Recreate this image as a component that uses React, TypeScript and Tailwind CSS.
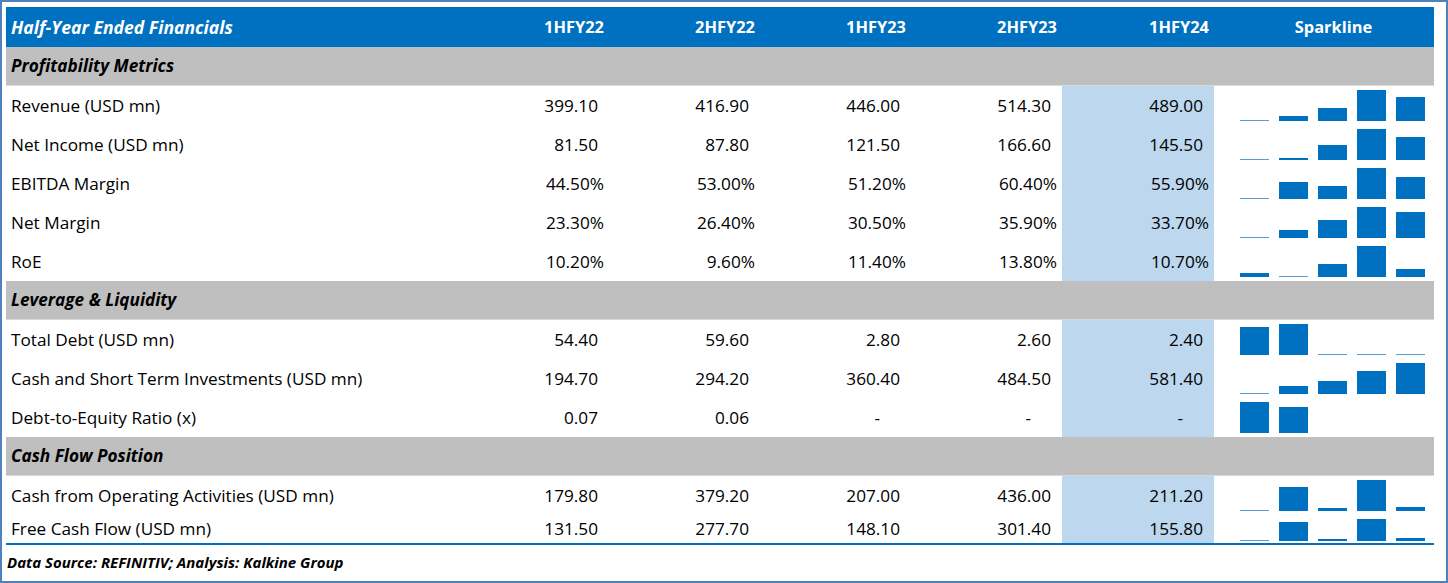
import React from 'react'

// Half-year financials table with column sparklines (Excel-style)

type Row = {
  label: string
  values: string[]
  kind: 'num' | 'pct'
  spark: number[]
  bars?: number[]
  short?: boolean
}

type Section = { title: string; rows: Row[] }

const grid = 'grid grid-cols-[452px_151px_151px_151px_151px_152px_220px]'
const font = { fontFamily: '"Open Sans", "Noto Sans", sans-serif' }

const sections: Section[] = [
  {
    title: 'Profitability Metrics',
    rows: [
      { label: 'Revenue (USD mn)', values: ['399.10', '416.90', '446.00', '514.30', '489.00'], kind: 'num', spark: [399.1, 416.9, 446, 514.3, 489] },
      { label: 'Net Income (USD mn)', values: ['81.50', '87.80', '121.50', '166.60', '145.50'], kind: 'num', spark: [81.5, 87.8, 121.5, 166.6, 145.5] },
      { label: 'EBITDA Margin', values: ['44.50%', '53.00%', '51.20%', '60.40%', '55.90%'], kind: 'pct', spark: [44.5, 53, 51.2, 60.4, 55.9] },
      { label: 'Net Margin', values: ['23.30%', '26.40%', '30.50%', '35.90%', '33.70%'], kind: 'pct', spark: [23.3, 26.4, 30.5, 35.9, 33.7] },
      { label: 'RoE', values: ['10.20%', '9.60%', '11.40%', '13.80%', '10.70%'], kind: 'pct', spark: [10.2, 9.6, 11.4, 13.8, 10.7] },
    ],
  },
  {
    title: 'Leverage & Liquidity',
    rows: [
      { label: 'Total Debt (USD mn)', values: ['54.40', '59.60', '2.80', '2.60', '2.40'], kind: 'num', spark: [54.4, 59.6, 2.8, 2.6, 2.4] },
      { label: 'Cash and Short Term Investments (USD mn)', values: ['194.70', '294.20', '360.40', '484.50', '581.40'], kind: 'num', spark: [194.7, 294.2, 360.4, 484.5, 581.4] },
      { label: 'Debt-to-Equity Ratio (x)', values: ['0.07', '0.06', '-', '-', '-'], kind: 'num', spark: [], bars: [31, 26, 0, 0, 0] },
    ],
  },
  {
    title: 'Cash Flow Position',
    rows: [
      { label: 'Cash from Operating Activities (USD mn)', values: ['179.80', '379.20', '207.00', '436.00', '211.20'], kind: 'num', spark: [179.8, 379.2, 207, 436, 211.2] },
      { label: 'Free Cash Flow (USD mn)', values: ['131.50', '277.70', '148.10', '301.40', '155.80'], kind: 'num', spark: [131.5, 277.7, 148.1, 301.4, 155.8], short: true },
    ],
  },
]

function barHeights(row: Row, max: number): number[] {
  if (row.bars) return row.bars
  const lo = Math.min(...row.spark)
  const hi = Math.max(...row.spark)
  return row.spark.map((v) => ((v - lo) / (hi - lo)) * max)
}

function Sparkline({ row }: { row: Row }) {
  const max = row.short ? 22 : 31
  const heights = barHeights(row, max)
  return (
    <div className={`flex items-end gap-[10.5px] pl-[26px] pr-[8px] ${row.short ? 'pb-[2px]' : 'pb-[4px]'}`}>
      {heights.map((h, i) => {
        if (h === 0 && row.bars) return <div key={i} className="w-[28.5px]" />
        if (h < 1.5) return <div key={i} className="w-[28.5px] h-[1px] bg-[#5b9bd5]" />
        return <div key={i} className="w-[28.5px] bg-[#0070c0]" style={{ height: `${h}px` }} />
      })}
    </div>
  )
}

function DataRow({ row }: { row: Row }) {
  return (
    <div className={`${grid} ${row.short ? 'h-[28px]' : 'h-[39px]'} text-[17.2px] text-black`}>
      <div className="flex items-center pl-[5px]">{row.label}</div>
      {row.values.map((v, i) => {
        const pad = v === '-' ? 'pr-[31px]' : row.kind === 'pct' ? 'pr-[5px]' : 'pr-[11px]'
        return (
          <div key={i} className={`flex items-center justify-end ${pad} ${i === 4 ? 'bg-[#bdd7ee]' : ''}`}>
            {v}
          </div>
        )
      })}
      <Sparkline row={row} />
    </div>
  )
}

export default function App() {
  return (
    <div className="w-[1448px] h-[583px] border-2 border-[#4f81bd] bg-white pl-[4px] pt-[5px]" style={font}>
      <div className="w-[1428px]">
        <div className={`${grid} h-[40px] bg-[#0070c0] text-white font-bold text-[16.4px]`}>
          <div className="flex items-center pl-[5px] italic text-[17.6px]">Half-Year Ended Financials</div>
          {['1HFY22', '2HFY22', '1HFY23', '2HFY23', '1HFY24'].map((h) => (
            <div key={h} className="flex items-center justify-end pr-[5px]">{h}</div>
          ))}
          <div className="flex items-center justify-center pl-[19px]">Sparkline</div>
        </div>
        {sections.map((s) => (
          <div key={s.title}>
            <div className="h-[39px] bg-[#bfbfbf] flex items-center pl-[5px] font-bold italic text-[17.2px] text-black border-b border-[#d9d9d9]">
              {s.title}
            </div>
            {s.rows.map((r) => (
              <DataRow key={r.label} row={r} />
            ))}
          </div>
        ))}
        <div className="h-[2px] bg-[#0070c0]" />
        <div className="pt-[6px] pl-[1px] font-bold italic text-[15px] text-black">
          Data Source: REFINITIV; Analysis: Kalkine Group
        </div>
      </div>
    </div>
  )
}
